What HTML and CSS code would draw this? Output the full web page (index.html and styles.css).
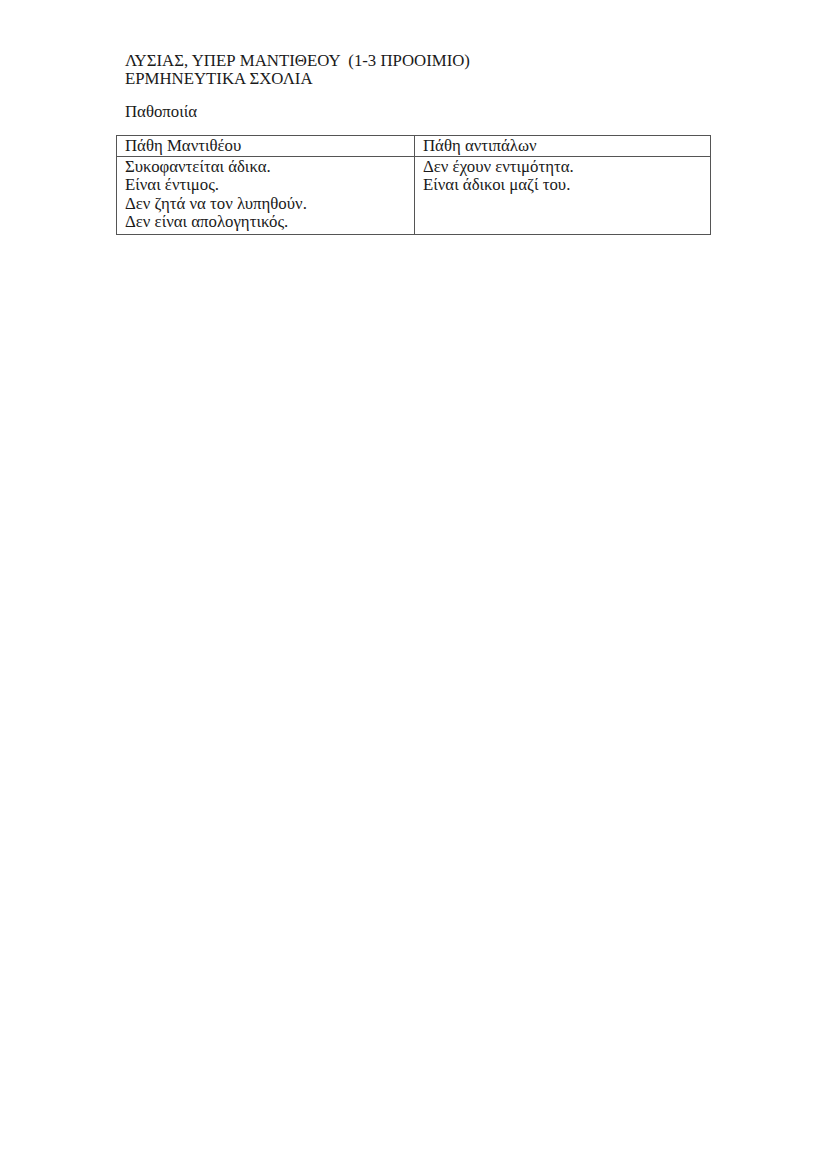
FILE: index.html
```html
<!DOCTYPE html>
<html lang="el">
<head>
<meta charset="utf-8">
<link rel="stylesheet" href="styles.css">
</head>
<body>
<div class="page">
  <div class="title">ΛΥΣΙΑΣ, ΥΠΕΡ ΜΑΝΤΙΘΕΟΥ &nbsp;(1-3 ΠΡΟΟΙΜΙΟ)</div>
  <div class="title">ΕΡΜΗΝΕΥΤΙΚΑ ΣΧΟΛΙΑ</div>
  <div class="section">Παθοποιία</div>
  <table class="grid">
    <tr class="head">
      <td class="c1">Πάθη Μαντιθέου</td>
      <td class="c2">Πάθη αντιπάλων</td>
    </tr>
    <tr class="body">
      <td class="c1">Συκοφαντείται άδικα.<br>Είναι έντιμος.<br>Δεν ζητά να τον λυπηθούν.<br>Δεν είναι απολογητικός.</td>
      <td class="c2">Δεν έχουν εντιμότητα.<br>Είναι άδικοι μαζί του.</td>
    </tr>
  </table>
</div>
</body>
</html>
```
FILE: styles.css
```css
html, body {
  margin: 0;
  padding: 0;
  background: #ffffff;
}
.page {
  padding: 52px 0 0 125px;
  font-family: "Liberation Serif", "Times New Roman", serif;
  font-size: 16.8px;
  line-height: 18px;
  color: #1a1a1a;
}
.title {
  white-space: pre;
}
.section {
  margin-top: 15px;
}
.grid {
  margin-top: 14px;
  margin-left: -9px;
  border-collapse: collapse;
  width: 595px;
  font-size: 16.8px;
  line-height: 18.5px;
}
.grid td {
  border: 1px solid #555;
  padding: 1px 0 0 8px;
  vertical-align: top;
  text-align: left;
}
.grid td.c1 {
  width: 289px;
}
.grid .head td {
  height: 18px;
}
.grid .body td {
  padding-bottom: 2px;
}
```
